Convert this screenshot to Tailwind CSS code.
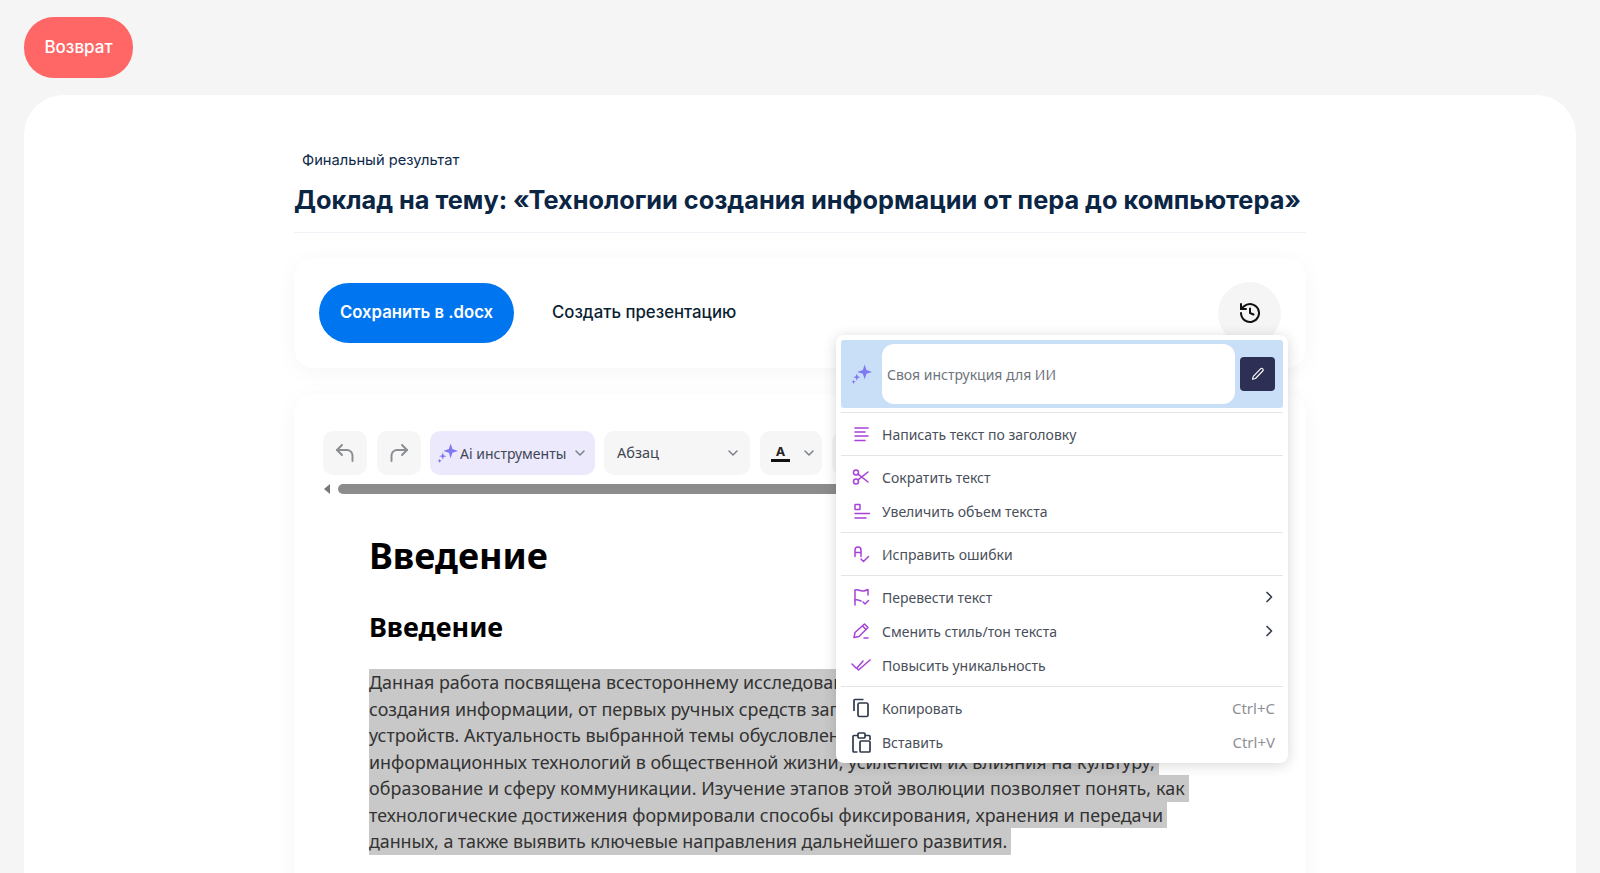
<!DOCTYPE html>
<html lang="ru">
<head>
<meta charset="utf-8">
<script src="https://cdn.jsdelivr.net/npm/@tailwindcss/browser@4"></script>
</head>
<body class="bg-[#f5f5f5] font-['Inter',sans-serif]">
<div class="h-[873px] overflow-hidden px-[24px] pt-[17px]">
  <button class="flex h-[61px] w-[109px] items-center justify-center rounded-[30px] bg-[#ff6666] text-[17px] font-medium text-white">Возврат</button>
  <main class="mt-[17px] h-[900px] rounded-t-[40px] bg-white pl-[270px] pr-[270px] pt-[55px]">
    <div class="relative w-[1012px]">
      <p class="pl-[8px] text-[14.700px] leading-[20px] text-[#0d2a4a]">Финальный результат</p>
      <h1 class="mt-[14px] whitespace-nowrap border-b border-[#f0f4f8] pb-[16px] text-[25.300px] font-bold leading-[32px] text-[#0b2545]">Доклад на тему: «Технологии создания информации от пера до компьютера»</h1>

      <div class="mt-[25px] flex h-[110px] items-center rounded-[20px] bg-white pl-[25px] pr-[25px] shadow-[0_4px_24px_rgba(0,0,0,0.04)]">
        <button class="h-[60px] w-[195px] rounded-[30px] bg-[#0075f0] text-[16.700px] font-semibold text-white">Сохранить в .docx</button>
        <span class="ml-[38px] text-[16.800px] font-medium text-[#0b1f33]">Создать презентацию</span>
        <button class="ml-auto flex h-[63px] w-[63px] items-center justify-center rounded-full bg-[#f5f5f5]">
          <svg width="24" height="24" viewBox="0 0 24 24" fill="none" stroke="#111" stroke-width="2" stroke-linecap="round" stroke-linejoin="round"><path d="M3 12a9 9 0 1 0 3-6.700L3 8"/><path d="M3 3v5h5"/><path d="M12 7.500V12l3.500 1.500"/></svg>
        </button>
      </div>

      <div class="mt-[26px] h-[600px] rounded-[20px] bg-white pt-[37px] shadow-[0_4px_24px_rgba(0,0,0,0.04)]">
        <div class="flex h-[44px] items-center overflow-hidden pl-[29px]">
          <button class="flex h-[44px] w-[44px] shrink-0 items-center justify-center rounded-[10px] bg-[#f6f6f6]">
            <svg width="20" height="20" viewBox="0 0 20 20" fill="none" stroke="#8b8f94" stroke-width="2" stroke-linecap="round" stroke-linejoin="round"><path d="M7 2 2 7l5 5"/><path d="M2 7h10a5.500 5.500 0 0 1 5.500 5.500V18"/></svg>
          </button>
          <button class="ml-[10px] flex h-[44px] w-[44px] shrink-0 items-center justify-center rounded-[10px] bg-[#f6f6f6]">
            <svg width="20" height="20" viewBox="0 0 20 20" fill="none" stroke="#8b8f94" stroke-width="2" stroke-linecap="round" stroke-linejoin="round"><path d="m13 2 5 5-5 5"/><path d="M18 7H8a5.500 5.500 0 0 0-5.500 5.500V18"/></svg>
          </button>
          <button class="ml-[9px] flex h-[44px] w-[165px] shrink-0 items-center rounded-[10px] bg-[#ece9fd] pl-[7px] font-['Noto_Sans',sans-serif] text-[14px] text-[#3f4654]">
            <svg width="21" height="21" viewBox="0 0 20 20" fill="#7f78f5"><path d="M13 .5l1.700 5.300 5.300 1.700-5.300 1.700L13 14.500l-1.700-5.300L6 7.500l5.300-1.700z"/><path d="m5.500 9 .9 2.600 2.600.9-2.600.9-.9 2.600-.9-2.600-2.600-.9 2.600-.9z"/><path d="m2.500 15 .6 1.400 1.400.6-1.400.6-.6 1.400-.6-1.400L.5 17l1.400-.6z"/></svg>
            <span class="ml-[2px]">Ai инструменты</span>
            <svg class="ml-[8px]" width="12" height="12" viewBox="0 0 12 12" fill="none" stroke="#7a8088" stroke-width="1.500" stroke-linecap="round" stroke-linejoin="round"><path d="m2 4 4 4 4-4"/></svg>
          </button>
          <button class="ml-[9px] flex h-[44px] w-[146px] shrink-0 items-center justify-between rounded-[10px] bg-[#f6f6f6] pl-[13px] pr-[11px] font-['Noto_Sans',sans-serif] text-[14.500px] text-[#3f4654]">
            <span>Абзац</span>
            <svg width="12" height="12" viewBox="0 0 12 12" fill="none" stroke="#7a8088" stroke-width="1.500" stroke-linecap="round" stroke-linejoin="round"><path d="m2 4 4 4 4-4"/></svg>
          </button>
          <button class="ml-[10px] flex h-[44px] w-[62px] shrink-0 items-center rounded-[10px] bg-[#f6f6f6] pl-[11px] font-['Noto_Sans',sans-serif]">
            <span class="w-[19px] border-b-[3px] border-[#111] text-center text-[13px] font-bold leading-[15px] text-[#222]">A</span>
            <svg class="ml-[13px]" width="12" height="12" viewBox="0 0 12 12" fill="none" stroke="#7a8088" stroke-width="1.500" stroke-linecap="round" stroke-linejoin="round"><path d="m2 4 4 4 4-4"/></svg>
          </button>
          <span class="ml-[10px] h-[44px] w-[60px] shrink-0 rounded-[10px] bg-[#f6f6f6]"></span>
        </div>
        <div class="mt-[9px] flex h-[10px] items-center pl-[30px] pr-[30px]">
          <span class="h-0 w-0 border-y-[5px] border-r-[6px] border-y-transparent border-r-[#777]"></span>
          <span class="ml-[8px] h-[10px] flex-1 rounded-full bg-[#8c8c8c]"></span>
        </div>
        <div class="pl-[75px] pt-[37px] font-['Noto_Sans',sans-serif]">
          <h2 class="text-[36px] font-bold leading-[50px] text-black">Введение</h2>
          <h3 class="mt-[28px] text-[27px] font-bold leading-[36px] text-black">Введение</h3>
          <div class="mt-[24px] whitespace-nowrap text-[17.900px] leading-[26.500px] text-[#333]">
            <div class="w-fit bg-[#c8c8c8] pr-[4px]">Данная работа посвящена всестороннему исследованию эволюции технологий</div>
            <div class="w-fit bg-[#c8c8c8] pr-[4px]">создания информации, от первых ручных средств записи до цифровых</div>
            <div class="w-fit bg-[#c8c8c8] pr-[4px]">устройств. Актуальность выбранной темы обусловлена возрастающей ролью</div>
            <div class="w-fit bg-[#c8c8c8] pr-[4px]">информационных технологий в общественной жизни, усилением их влияния на культуру,</div>
            <div class="w-fit bg-[#c8c8c8] pr-[4px] tracking-[0.070px]">образование и сферу коммуникации. Изучение этапов этой эволюции позволяет понять, как</div>
            <div class="w-fit bg-[#c8c8c8] pr-[4px] tracking-[0.020px]">технологические достижения формировали способы фиксирования, хранения и передачи</div>
            <div class="w-fit bg-[#c8c8c8] pr-[4px] tracking-[-0.070px]">данных, а также выявить ключевые направления дальнейшего развития.</div>
          </div>
        </div>
      </div>

      <!-- context menu -->
      <div class="absolute left-[542px] top-[185px] w-[452px] rounded-[8px] bg-white px-[5px] pb-[4px] pt-[5px] font-['Noto_Sans',sans-serif] text-[14px] text-[#4a4f5a] shadow-[0_2px_14px_rgba(0,0,0,0.16)]">
        <div class="flex h-[68px] items-center rounded-[3px] bg-[#c9dff8] pl-[10px] pr-[8px]">
          <svg class="mr-[10px]" width="21" height="21" viewBox="0 0 20 20" fill="#7f78f5"><path d="M13 .5l1.700 5.300 5.300 1.700-5.300 1.700L13 14.500l-1.700-5.300L6 7.500l5.300-1.700z"/><path d="m5.500 9 .9 2.600 2.600.9-2.600.9-.9 2.600-.9-2.600-2.600-.9 2.600-.9z"/><path d="m2.500 15 .6 1.400 1.400.6-1.400.6-.6 1.400-.6-1.400L.5 17l1.400-.6z"/></svg>
          <div class="flex h-[60px] w-[353px] items-center rounded-[12px] bg-white pl-[5px] text-[#6f747c]">Своя инструкция для ИИ</div>
          <button class="ml-[5px] flex h-[34px] w-[35px] items-center justify-center rounded-[4px] bg-[#2d2f54]">
            <svg width="14" height="14" viewBox="0 0 14 14" fill="none" stroke="#fff" stroke-width="1.100" stroke-linejoin="round"><path d="M9.500 1.800a1.500 1.500 0 0 1 2.200 2.200l-7.200 7.500-3 .8.800-3z"/></svg>
          </button>
        </div>
        <div class="mb-[4px] mt-[4px] h-px bg-[#e4e4e4]"></div>
        <div class="flex h-[34px] items-center">
          <svg class="ml-[12px] mr-[12px] shrink-0" width="17" height="17" viewBox="0 0 17 17" fill="none" stroke="#a642d9" stroke-width="1.600" stroke-linecap="round"><path d="M2 2h13M2 6h10M2 10h13M2 14.500h10"/></svg>
          <span>Написать текст по заголовку</span>
        </div>
        <div class="my-[4px] h-px bg-[#e4e4e4]"></div>
        <div class="flex h-[34px] items-center">
          <svg class="ml-[11px] mr-[12px] shrink-0" width="18" height="18" viewBox="0 0 18 18" fill="none" stroke="#a642d9" stroke-width="1.500" stroke-linecap="round"><circle cx="4" cy="4.500" r="2.500"/><circle cx="4" cy="13.500" r="2.500"/><path d="M6 6.200 16 14M6 11.800 16 4"/></svg>
          <span>Сократить текст</span>
        </div>
        <div class="flex h-[34px] items-center">
          <svg class="ml-[12px] mr-[12px] shrink-0" width="17" height="17" viewBox="0 0 17 17" fill="none" stroke="#a642d9" stroke-width="1.500" stroke-linecap="round"><rect x="2" y="1.500" width="5" height="5" rx="0.500"/><path d="M2 10.500h14.500M2 15h11"/></svg>
          <span>Увеличить объем текста</span>
        </div>
        <div class="my-[4px] h-px bg-[#e4e4e4]"></div>
        <div class="flex h-[34px] items-center">
          <svg class="ml-[12px] mr-[12px] shrink-0" width="17" height="17" viewBox="0 0 17 17" fill="none" stroke="#a642d9" stroke-width="1.500" stroke-linecap="round" stroke-linejoin="round"><path d="M2 10.500V4a3 3 0 0 1 6 0v6.500M2 6.500h6"/><path d="m8 13 2.500 2.500L15.500 10.500"/></svg>
          <span>Исправить ошибки</span>
        </div>
        <div class="my-[4px] h-px bg-[#e4e4e4]"></div>
        <div class="flex h-[34px] items-center">
          <svg class="ml-[12px] mr-[12px] shrink-0" width="17" height="18" viewBox="0 0 17 18" fill="none" stroke="#a642d9" stroke-width="1.500" stroke-linecap="round" stroke-linejoin="round"><path d="M2 17V2c3-1.500 5 1.500 8 1 2 0 4-1 5-1.500V7"/><path d="M2 12c3-1 4 .5 6 1"/><path d="m10 14 2 2 3.500-3.500"/></svg>
          <span>Перевести текст</span>
          <svg class="ml-auto mr-[8px]" width="12" height="12" viewBox="0 0 12 12" fill="none" stroke="#374151" stroke-width="1.700" stroke-linecap="round" stroke-linejoin="round"><path d="m4 1.500 4.500 4.500L4 10.500"/></svg>
        </div>
        <div class="flex h-[34px] items-center">
          <svg class="ml-[11px] mr-[12px] shrink-0" width="18" height="18" viewBox="0 0 18 18" fill="none" stroke="#a642d9" stroke-width="1.500" stroke-linecap="round" stroke-linejoin="round"><path d="M12.500 2 16 5.500 7 14.500l-5 1 1-5z"/><path d="M10.500 4 14 7.500M12 16h4"/></svg>
          <span>Сменить стиль/тон текста</span>
          <svg class="ml-auto mr-[8px]" width="12" height="12" viewBox="0 0 12 12" fill="none" stroke="#374151" stroke-width="1.700" stroke-linecap="round" stroke-linejoin="round"><path d="m4 1.500 4.500 4.500L4 10.500"/></svg>
        </div>
        <div class="flex h-[34px] items-center">
          <svg class="ml-[10px] mr-[11px] shrink-0" width="20" height="14" viewBox="0 0 20 14" fill="none" stroke="#a642d9" stroke-width="1.500" stroke-linecap="round" stroke-linejoin="round"><path d="m1 6 4 4M6 10l6-7M6 10.500l1.500 1.500L19 2"/></svg>
          <span>Повысить уникальность</span>
        </div>
        <div class="my-[4px] h-px bg-[#e4e4e4]"></div>
        <div class="flex h-[34px] items-center">
          <svg class="ml-[11px] mr-[11px] shrink-0" width="19" height="20" viewBox="0 0 19 20" fill="none" stroke="#2f3a4c" stroke-width="1.700" stroke-linejoin="round"><path d="M2 13V2.500a1 1 0 0 1 1-1h8.500"/><rect x="6" y="5" width="10" height="13.500" rx="1.500"/></svg>
          <span>Копировать</span>
          <span class="ml-auto mr-[8px] text-[15px] text-[#8d9096]">Ctrl+C</span>
        </div>
        <div class="flex h-[34px] items-center">
          <svg class="ml-[11px] mr-[11px] shrink-0" width="19" height="21" viewBox="0 0 19 21" fill="none" stroke="#2f3a4c" stroke-width="1.700" stroke-linejoin="round"><path d="M6 3.500H2a1 1 0 0 0-1 1V19a1 1 0 0 0 1 1h3.500"/><path d="M13 3.500h4a1 1 0 0 1 1 1V8"/><rect x="6" y="1" width="7" height="5" rx="1"/><rect x="8" y="9" width="10" height="11" rx="1"/></svg>
          <span>Вставить</span>
          <span class="ml-auto mr-[8px] text-[15px] text-[#8d9096]">Ctrl+V</span>
        </div>
      </div>
    </div>
  </main>
</div>
</body>
</html>
